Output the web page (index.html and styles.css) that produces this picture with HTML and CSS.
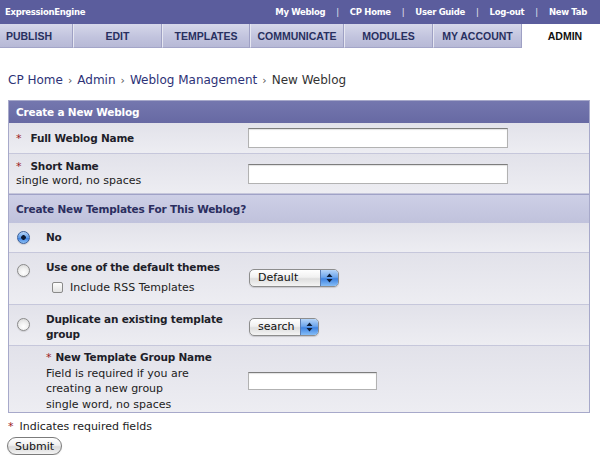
FILE: index.html
```html
<!DOCTYPE html>
<html>
<head>
<meta charset="utf-8">
<title>ExpressionEngine - New Weblog</title>
<link rel="stylesheet" href="styles.css">
</head>
<body>
<div class="topbar">
  <span class="brand">ExpressionEngine</span>
  <nav class="toplinks">
    <a>My Weblog</a><span class="sep">|</span>
    <a>CP Home</a><span class="sep">|</span>
    <a>User Guide</a><span class="sep">|</span>
    <a>Log-out</a><span class="sep">|</span>
    <a>New Tab</a>
  </nav>
</div>
<div class="tabs">
  <a class="tab tab-first">PUBLISH</a>
  <a class="tab">EDIT</a>
  <a class="tab">TEMPLATES</a>
  <a class="tab">COMMUNICATE</a>
  <a class="tab">MODULES</a>
  <a class="tab">MY ACCOUNT</a>
  <a class="tab tab-active">ADMIN</a>
</div>
<div class="crumbs">
  <a>CP Home</a><span class="arr">›</span><a>Admin</a><span class="arr">›</span><a>Weblog Management</a><span class="arr">›</span><span class="cur">New Weblog</span>
</div>
<div class="form-table">
  <div class="hdr hdr-main">Create a New Weblog</div>
  <div class="row row-a row-name">
    <div class="label"><span class="req">*</span><b>Full Weblog Name</b></div>
    <div class="field"><input class="text-input" type="text"></div>
  </div>
  <div class="row row-a row-short">
    <div class="label"><span class="req">*</span><b>Short Name</b><br>single word, no spaces</div>
    <div class="field"><input class="text-input" type="text"></div>
  </div>
  <div class="hdr hdr-sub">Create New Templates For This Weblog?</div>
  <div class="row row-b row-no">
    <div class="radio-cell"><span class="radio radio-on"></span></div>
    <div class="label"><b>No</b></div>
    <div class="field"></div>
  </div>
  <div class="row row-b row-theme">
    <div class="radio-cell radio-top"><span class="radio"></span></div>
    <div class="label"><b>Use one of the default themes</b>
      <div class="check-line"><span class="checkbox"></span>Include RSS Templates</div>
    </div>
    <div class="field"><span class="select select-default"><span class="val">Default</span><span class="cap"><svg width="7" height="10" viewBox="0 0 7 10"><path d="M3.5 0.5 L6.5 4 L0.5 4 Z M0.5 6 L6.5 6 L3.5 9.5 Z" fill="#10203a"/></svg></span></span></div>
  </div>
  <div class="row row-b row-dup">
    <div class="radio-cell radio-top radio-low"><span class="radio"></span></div>
    <div class="label"><b>Duplicate an existing template<br>group</b></div>
    <div class="field"><span class="select select-search"><span class="val">search</span><span class="cap"><svg width="7" height="10" viewBox="0 0 7 10"><path d="M3.5 0.5 L6.5 4 L0.5 4 Z M0.5 6 L6.5 6 L3.5 9.5 Z" fill="#10203a"/></svg></span></span></div>
  </div>
  <div class="row row-b row-group">
    <div class="radio-cell"></div>
    <div class="label label-group"><span class="req req-tight">*</span><b>New Template Group Name</b><br>Field is required if you are<br>creating a new group<br>single word, no spaces</div>
    <div class="field"><input class="text-input text-short" type="text"></div>
  </div>
</div>
<p class="note"><span class="req">*</span>Indicates required fields</p>
<button class="submit" type="button">Submit</button>
</body>
</html>
```
FILE: styles.css
```css
body {
  margin: 0;
  font-family: "DejaVu Sans", "Noto Sans", sans-serif;
  font-size: 11px;
  color: #222;
  background: #fff;
}

a { text-decoration: none; }

.topbar {
  height: 24px;
  background: #5b5d9d;
  display: flex;
  align-items: center;
  justify-content: space-between;
  padding: 0 13px 0 5px;
  color: #fff;
  font-weight: bold;
  font-size: 8.5px;
  letter-spacing: -0.3px;
}

.toplinks {
  display: flex;
  gap: 11px;
}

.toplinks a { color: #fff; }
.toplinks .sep { color: #e6e6f2; font-weight: normal; }

.tabs {
  display: grid;
  grid-template-columns: 73px 89px 88px 94px 89px 89px 1fr;
  height: 24px;
}

.tab {
  display: flex;
  align-items: center;
  justify-content: center;
  box-sizing: border-box;
  font-family: "Liberation Sans", Arial, sans-serif;
  font-weight: bold;
  font-size: 10.5px;
  color: #28305f;
  background: linear-gradient(#d6d7ea, #c2c4de 55%, #b7b9d6);
  border-left: 1px solid #e6e7f1;
  border-right: 1px solid #9ea0c4;
  border-bottom: 1px solid #a3a5c8;
}

.tab-first { padding-right: 14px; border-left: none; }

.tab-active {
  background: #fff;
  border: none;
  color: #111;
  padding-left: 8px;
}

.crumbs {
  margin: 24px 8px 0;
  font-size: 12px;
  line-height: 16px;
  color: #333;
}

.crumbs a { color: #2d3277; }
.crumbs .arr { color: #555; margin: 0 5px; font-size: 11px; }

.form-table {
  margin: 11px 10px 0 8px;
  border: 1px solid #a7a9ca;
}

.hdr {
  display: flex;
  align-items: center;
  padding-left: 7px;
  font-weight: bold;
  font-size: 10.5px;
  letter-spacing: -0.2px;
}

.hdr-main {
  height: 22px;
  background: linear-gradient(#7477ae, #6769a3);
  color: #fff;
}

.hdr-sub {
  height: 28px;
  border-top: 1px solid #a0a2c7;
  background: linear-gradient(#cdcfe6, #c0c2dc);
  color: #2b2e60;
}

.row {
  display: grid;
  background: linear-gradient(#e2e2ea, #ededf2);
  border-bottom: 1px solid #c6c7db;
}

.row-a { grid-template-columns: 231px 1fr; }
.row-b { grid-template-columns: 31px 200px 1fr; }

.row-group { border-bottom: none; }

.label {
  padding-left: 7px;
  line-height: 14px;
}

.label b {
  font-size: 10.5px;
  letter-spacing: -0.2px;
  color: #1e1e2a;
}

.row-b .label { padding-left: 6px; }

.field {
  display: flex;
  align-items: center;
  padding-left: 8px;
}

.req {
  color: #9b1c1c;
  margin-right: 9px;
}

.req-tight { margin-right: 4px; }

.row-name { padding: 5px 0; }
.row-name .label { align-self: center; }

.row-short { padding: 5px 0; }

.row-no { height: 29px; align-items: center; }

.row-theme { padding: 7px 0 9px; }
.row-theme .label { line-height: 15px; }

.row-dup { padding: 7px 0 3px; }
.row-dup .label { line-height: 15px; }

.row-group { padding: 4px 0 0; }
.label-group { line-height: 15.5px; padding-left: 9px; }

.radio-cell { padding-left: 8px; display: flex; align-items: center; }
.radio-top { align-items: flex-start; padding-top: 4px; }
.radio-low { padding-top: 6px; }

.radio {
  display: block;
  width: 13px;
  height: 13px;
  box-sizing: border-box;
  border-radius: 50%;
  border: 1px solid #8a8a8a;
  background: radial-gradient(circle at 50% 70%, #ffffff, #f0f0f0 45%, #d3d3d3);
  box-shadow: 0 1px 1px rgba(0,0,0,0.12);
}

.radio-on {
  border-color: #3b5f9a;
  background: radial-gradient(circle, #0e1a33 0, #0e1a33 2px, transparent 2.6px),
              linear-gradient(#b9d6f8, #5f9ce8 50%, #3b7fe0 55%, #8cc0f6);
}

.check-line {
  display: flex;
  align-items: center;
  margin-top: 5px;
  padding-left: 6px;
  line-height: 15px;
}

.checkbox {
  width: 11px;
  height: 11px;
  box-sizing: border-box;
  border: 1px solid #8a8a8a;
  border-radius: 2px;
  background: linear-gradient(#fdfdfd, #e3e3e3);
  margin-right: 7px;
}

.text-input {
  width: 260px;
  height: 20px;
  box-sizing: border-box;
  margin: 0;
  border: 1px solid #b2b2b2;
  border-top-color: #7d7d7d;
  background: #fff;
  box-shadow: inset 0 1px 1px rgba(0,0,0,0.12);
  font: 11px "DejaVu Sans", sans-serif;
}

.text-short { width: 129px; height: 18px; }

.select {
  display: inline-flex;
  height: 18px;
  box-sizing: border-box;
  margin-left: 1px;
  border: 1px solid #8d8d8d;
  border-radius: 5px;
  overflow: hidden;
  background: linear-gradient(#ffffff, #f1f1f1 45%, #dedede 55%, #f4f4f4);
  box-shadow: 0 1px 1px rgba(0,0,0,0.15);
}

.select-default { width: 90px; }
.select-search { width: 70px; }

.select .val {
  flex: 1;
  padding-left: 8px;
  font-size: 11px;
  line-height: 16px;
  color: #111;
}

.select .cap {
  width: 17px;
  display: flex;
  align-items: center;
  justify-content: center;
  border-left: 1px solid #5b7db3;
  background: linear-gradient(#b5d4f8, #6ea6ec 45%, #3f84e2 55%, #86bdf6);
}

.note {
  margin: 7px 8px 0;
  line-height: 14px;
  color: #222;
}

.note .req { margin-right: 6px; }

.submit {
  display: block;
  margin: 3px 0 0 7px;
  height: 18px;
  width: 55px;
  padding: 0;
  border: 1px solid #7b7b7b;
  border-radius: 9px;
  background: linear-gradient(#ffffff, #f0f0f0 45%, #d9d9d9 55%, #f3f3f3);
  box-shadow: 0 1px 1px rgba(0,0,0,0.15);
  font: 11px "DejaVu Sans", sans-serif;
  color: #111;
}
```
